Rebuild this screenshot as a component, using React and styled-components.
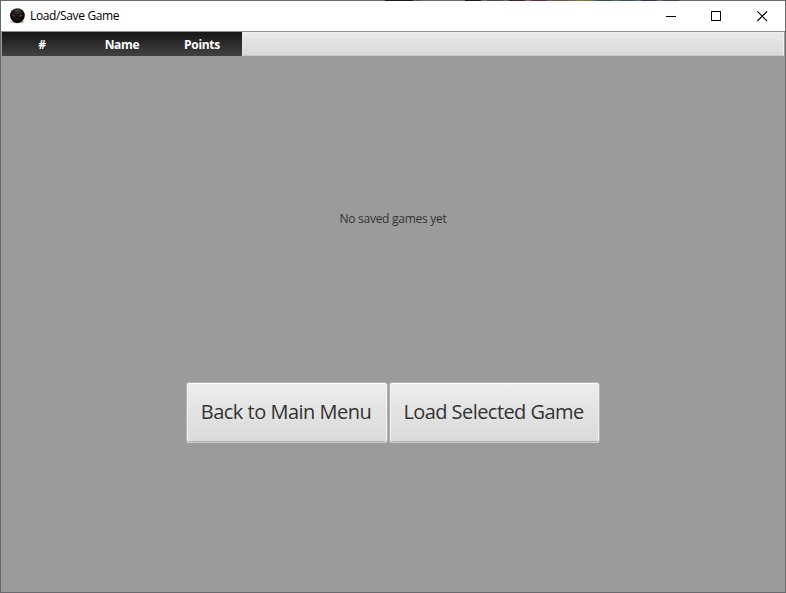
import React from 'react';
import styled, { createGlobalStyle } from 'styled-components';

const GlobalStyle = createGlobalStyle`
  * { box-sizing: border-box; }
  body { margin: 0; overflow: hidden; }
`;

const Window = styled.div`
  width: 786px;
  height: 593px;
  display: flex;
  flex-direction: column;
  border: 1px solid #66696d;
  border-top: 0;
  background: #9b9b9b;
  font-family: "Open Sans", "Noto Sans", sans-serif;
  white-space: nowrap;
`;

const TopEdge = styled.div`
  flex: 0 0 1px;
  margin: 0 -1px;
  background: linear-gradient(90deg,
    #66696d 0 385px, #1a1718 385px 413px, #55575e 413px 420px, #6a6a6a 420px 465px,
    #1a1718 465px 481px, #66666a 481px 487px, #4a484a 487px 503px, #66666a 503px 509px,
    #501b22 509px 525px, #66666a 525px 531px, #7c2428 531px 547px, #66666a 547px 553px,
    #89502c 553px 569px, #66666a 569px 575px, #81771f 575px 591px, #66666a 591px 597px,
    #285a32 597px 613px, #66666a 613px 619px, #1f5b77 619px 635px, #66666a 635px 641px,
    #30346b 641px 657px, #66666a 657px 663px, #623263 663px 679px, #66696d 679px);
`;

const TitleBar = styled.header`
  flex: 0 0 30px;
  display: flex;
  align-items: center;
  padding-left: 8px;
  background: #fff;
`;

const Title = styled.h1`
  margin: 0 auto 0 5px;
  font-size: 12px;
  font-weight: 400;
  line-height: 16px;
  letter-spacing: ${p => p.$track};
  color: #000;
`;

const WindowControl = styled.button`
  width: 45.5px;
  height: 30px;
  display: grid;
  place-items: center;
  padding: 0;
  border: 0;
  background: none;
`;

const TableHeader = styled.div`
  flex: 0 0 25px;
  display: flex;
  border-top: 1px solid #8f8f8f;
  padding: 0 1px;
`;

const Column = styled.div`
  width: 80px;
  height: 24px;
  font-size: 12px;
  font-weight: 700;
  line-height: 25px;
  letter-spacing: -0.3px;
  text-align: center;
  color: #fff;
  background: linear-gradient(#171717, #414141);
`;

const HeaderFiller = styled.div`
  flex: 1;
  height: 24px;
  border: 1px solid #f0f0f0;
  border-left-color: #e4e4e4;
  border-bottom-color: #c9c9c9;
  background: linear-gradient(#eaeaea, #d8d8d8);
`;

const Placeholder = styled.div`
  flex: 0 0 326px;
  display: grid;
  place-items: center;
  padding-bottom: 2px;
  font-size: 12px;
  letter-spacing: ${p => p.$track};
  color: #333;
`;

const Actions = styled.div`
  display: flex;
  justify-content: center;
  gap: 1px;
`;

const ActionButton = styled.button`
  width: ${p => p.$width};
  height: 61px;
  padding: 0 2px 2px 0;
  border: 1px solid #b4b4b4;
  border-bottom-color: #cfcfcf;
  border-radius: 3px;
  background: linear-gradient(#ededed, #d9d9d9);
  box-shadow: inset 0 1px #fbfbfb, inset 1px 0 #f1f1f1, inset -1px 0 #f1f1f1, inset 0 -1px #b0b0b0;
  font-family: inherit;
  font-size: 20px;
  letter-spacing: ${p => p.$track};
  color: #333;
`;

const AppIcon = () => (
  <svg width="16" height="16" viewBox="0 0 16 16">
    <defs>
      <radialGradient id="orb" cx=".5" cy=".15" r=".65">
        <stop offset="0" stopColor="#444" />
        <stop offset=".5" stopColor="#181717" />
        <stop offset="1" stopColor="#050505" />
      </radialGradient>
    </defs>
    <ellipse cx="8.3" cy="13.8" rx="7.4" ry="1.6" fill="#bdbdbd" />
    <circle cx="8.4" cy="7.6" r="7.4" fill="url(#orb)" />
    <path d="M3.4 7l2.2 1.3M10.8 8.3l2.2-1.3" stroke="#b82a1c" strokeWidth="1.3" />
    <path d="M5.4 11.3h6" stroke="#2b2726" />
  </svg>
);

export default function App() {
  return (
    <>
      <GlobalStyle />
      <Window>
        <TopEdge />
        <TitleBar>
          <AppIcon />
          <Title $track="-0.36px">Load/Save Game</Title>
          <WindowControl aria-label="Minimize">
            <svg width="11" height="11" shapeRendering="crispEdges"><path d="M0 5.5h10" stroke="#000" /></svg>
          </WindowControl>
          <WindowControl aria-label="Maximize">
            <svg width="11" height="11" shapeRendering="crispEdges"><path d="M.5 .5h9v9h-9z" fill="none" stroke="#000" /></svg>
          </WindowControl>
          <WindowControl aria-label="Close">
            <svg width="11" height="11"><path d="M.3 .3l9.8 9.8M10.1 .3l-9.8 9.8" stroke="#000" strokeWidth="1.1" /></svg>
          </WindowControl>
        </TitleBar>
        <TableHeader>
          <Column>#</Column>
          <Column>Name</Column>
          <Column>Points</Column>
          <HeaderFiller />
        </TableHeader>
        <Placeholder $track="-0.27px">No saved games yet</Placeholder>
        <Actions>
          <ActionButton $width="202px" $track="-0.5px">Back to Main Menu</ActionButton>
          <ActionButton $width="211px" $track="-0.56px">Load Selected Game</ActionButton>
        </Actions>
      </Window>
    </>
  );
}
